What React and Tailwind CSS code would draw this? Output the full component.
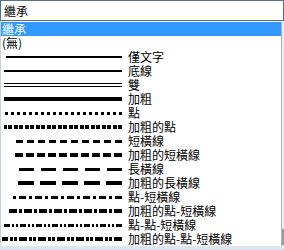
import React from 'react'

const R = 121

// each style: stroke width, dasharray, left start x
const lineRows = [
  { label: '僅文字', w: 2, dash: null, x1: 5 },
  { label: '底線', w: 2, dash: null, x1: 3 },
  { label: '雙', double: true, x1: 3 },
  { label: '加粗', w: 4, dash: null, x1: 3 },
  { label: '點', w: 3, dash: '3 3', x1: 3 },
  { label: '加粗的點', w: 4, dash: '4 1.5', x1: 3 },
  { label: '短橫線', w: 3, dash: '7 4', x1: 12 },
  { label: '加粗的短橫線', w: 4, dash: '8 3', x1: 13 },
  { label: '長橫線', w: 3, dash: '15 7', x1: 15 },
  { label: '加粗的長橫線', w: 4, dash: '16 6', x1: 14 },
  { label: '點-短橫線', w: 3, dash: '7 3 3 3', x1: 12 },
  { label: '加粗的點-短橫線', w: 4, dash: '8 2 3 2', x1: 7 },
  { label: '點-點-短橫線', w: 3, dash: '6 2 2 2 2 2', x1: 1 },
  { label: '加粗的點-點-短橫線', w: 4, dash: '8 2 3 1 3 2', x1: 1 },
]

const font = { fontFamily: '"Noto Sans CJK TC", "Noto Sans CJK JP", sans-serif' }

const LineSample = ({ row }) => (
  <svg width="124" height="14" viewBox="0 0 124 14" shapeRendering="crispEdges" className="shrink-0">
    {row.double ? (
      <>
        <line x1={R} y1="5.5" x2={row.x1} y2="5.5" stroke="#000" strokeWidth="1" />
        <line x1={R} y1="8.5" x2={row.x1} y2="8.5" stroke="#000" strokeWidth="1" />
      </>
    ) : (
      <line
        x1={R}
        y1="7"
        x2={row.x1}
        y2="7"
        stroke="#000"
        strokeWidth={row.w}
        strokeDasharray={row.dash || undefined}
      />
    )}
  </svg>
)

export default function App() {
  return (
    <div className="w-[284px] h-[250px] bg-white overflow-hidden flex flex-col text-[12px] leading-[14px] text-black" style={font}>
      {/* input */}
      <div className="h-[21px] shrink-0 border border-[#56708f] bg-white flex items-center pl-[3px]">
        <span>繼承</span>
      </div>

      {/* list */}
      <div className="flex flex-1 border-l border-[#c9d1db] pt-[1px] min-h-0">
        <div className="flex-1 flex flex-col">
          <div className="h-[14px] bg-[#3399ff] text-white pl-[1px] flex items-center">繼承</div>
          <div className="h-[14px] pl-[1px] flex items-center">(無)</div>
          {lineRows.map((row) => (
            <div key={row.label} className="h-[14px] flex items-center">
              <LineSample row={row} />
              <span className="ml-[3px] whitespace-nowrap">{row.label}</span>
            </div>
          ))}
        </div>
        <div className="w-[3px] shrink-0 border-l border-[#b4b4b4] bg-[#ececec] flex flex-col justify-end">
          <div className="h-[16px] bg-[#9a9a9a] mb-[1px]" />
        </div>
      </div>

      <div className="h-[4px] shrink-0 bg-[#dfe5ec]" />
    </div>
  )
}
